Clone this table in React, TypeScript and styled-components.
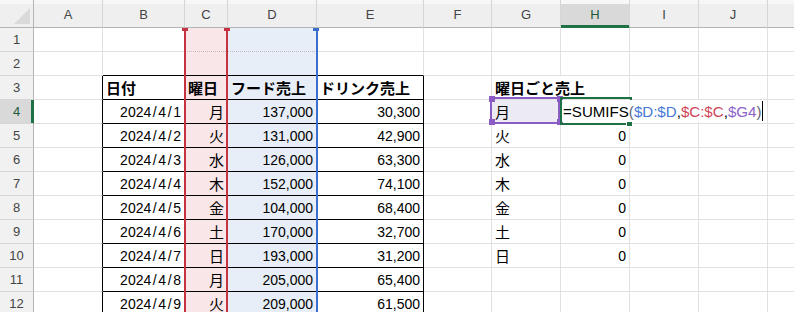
import React from 'react';
import styled, { createGlobalStyle } from 'styled-components';

const GlobalStyle = createGlobalStyle`
  html, body {
    margin: 0;
    padding: 0;
    background: #ffffff;
    overflow: hidden;
  }
  body {
    font-family: "Liberation Sans", "Noto Sans CJK JP", sans-serif;
  }
`;

// column widths include the right grid line
const COLS = ['A', 'B', 'C', 'D', 'E', 'F', 'G', 'H', 'I', 'J', 'K'];
const COL_W = [69, 82, 43, 89, 107, 68, 69, 69, 69, 69, 27];
const HEAD_W = 34;
const HEAD_H = 28;
const ROW_H = 24;
const ROW_COUNT = 12;

const colLeft = (i: number) => HEAD_W + COL_W.slice(0, i).reduce((a, b) => a + b, 0);
const rowTop = (r: number) => HEAD_H + ROW_H * (r - 1);

const GRID = '#e1e1e1';
const HEAD_LINE = '#b4b4b4';
const EXCEL_GREEN = '#1e7145';
const REF_BLUE = '#3b6fce';
const REF_RED = '#c4333f';
const REF_PURPLE = '#8a5cc4';

const sales = [
  ['2024/4/1', '月', '137,000', '30,300'],
  ['2024/4/2', '火', '131,000', '42,900'],
  ['2024/4/3', '水', '126,000', '63,300'],
  ['2024/4/4', '木', '152,000', '74,100'],
  ['2024/4/5', '金', '104,000', '68,400'],
  ['2024/4/6', '土', '170,000', '32,700'],
  ['2024/4/7', '日', '193,000', '31,200'],
  ['2024/4/8', '月', '205,000', '65,400'],
  ['2024/4/9', '火', '209,000', '61,500'],
];
const weekdays = ['月', '火', '水', '木', '金', '土', '日'];

type CellSpec = {
  text?: React.ReactNode;
  align?: 'left' | 'right';
  bold?: boolean;
  jp?: boolean;
  fill?: string;
  right?: string;
  bottom?: string;
  dotted?: boolean;
};

const DateText = ({ value }: { value: string }) => {
  const parts = value.split('/');
  return (
    <>
      {parts.map((p, i) => (
        <React.Fragment key={i}>
          {i > 0 && <Slash>/</Slash>}
          {p}
        </React.Fragment>
      ))}
    </>
  );
};

function specFor(row: number, col: number): CellSpec {
  const s: CellSpec = {};
  const inTable = row >= 3 && col >= 1 && col <= 4;

  if (inTable) {
    s.right = '#000';
    s.bottom = '#000';
  }
  if (row === 2 && col >= 1 && col <= 4) s.bottom = '#000';
  if (row >= 3 && col === 0) s.right = '#000';

  if (col === 2) s.fill = '#f8e6e9';
  if (col === 3) s.fill = '#e8eef8';
  if (row === 1 && (col === 2 || col === 3)) s.dotted = true;

  if (row === 3) {
    const heads: Record<number, string> = { 1: '日付', 2: '曜日', 3: 'フード売上', 4: 'ドリンク売上', 6: '曜日ごと売上' };
    if (heads[col]) {
      s.text = heads[col];
      s.bold = true;
      s.jp = true;
    }
    if (col === 6) s.right = 'transparent';
  }

  if (row >= 4) {
    const rec = sales[row - 4];
    if (col === 1) {
      s.text = <DateText value={rec[0]} />;
      s.align = 'right';
    }
    if (col === 2) {
      s.text = rec[1];
      s.align = 'right';
      s.jp = true;
    }
    if (col === 3) {
      s.text = rec[2];
      s.align = 'right';
    }
    if (col === 4) {
      s.text = rec[3];
      s.align = 'right';
    }
  }

  if (row >= 4 && row <= 10) {
    if (col === 6) {
      s.text = weekdays[row - 4];
      s.jp = true;
    }
    if (col === 7 && row > 4) {
      s.text = '0';
      s.align = 'right';
    }
  }
  if (row === 4 && col === 6) s.fill = '#ecebf4';

  return s;
}

export default function App() {
  const rows = Array.from({ length: ROW_COUNT }, (_, i) => i + 1);

  return (
    <>
      <GlobalStyle />
      <Sheet>
        <Corner>
          <svg width="34" height="28" viewBox="0 0 34 28">
            <polygon points="30,8 30,24 14,24" fill="#dadada" />
          </svg>
        </Corner>
        {COLS.map((c, i) => (
          <ColHead key={c} $active={i === 7}>
            {c === 'K' ? '' : c}
          </ColHead>
        ))}

        {rows.map((r) => (
          <React.Fragment key={r}>
            <RowHead $active={r === 4}>{r}</RowHead>
            {COLS.map((c, ci) => {
              const s = specFor(r, ci);
              return (
                <Cell
                  key={c}
                  $align={s.align}
                  $bold={s.bold}
                  $jp={s.jp}
                  $fill={s.fill}
                  $right={s.right}
                  $bottom={s.bottom}
                  $dotted={s.dotted}
                >
                  {s.text}
                </Cell>
              );
            })}
          </React.Fragment>
        ))}

        {/* $D:$D reference */}
        <RefBox $color={REF_BLUE} $x={colLeft(3) - 2} $y={HEAD_H} $w={92} $h={320} $open />
        <Handle $color={REF_BLUE} $x={colLeft(4) - 4} $y={HEAD_H} $h={3} />

        {/* $C:$C reference */}
        <RefBox $color={REF_RED} $x={colLeft(2) - 1} $y={HEAD_H} $w={44} $h={320} $open />
        <Handle $color={REF_RED} $x={colLeft(2) - 3} $y={HEAD_H} $h={3} />
        <Handle $color={REF_RED} $x={colLeft(3) - 4} $y={HEAD_H} $h={3} />

        {/* $G4 reference */}
        <RefBox $color={REF_PURPLE} $x={colLeft(6) - 2} $y={rowTop(4) - 3} $w={70} $h={27} />
        <Handle $color={REF_PURPLE} $x={colLeft(6) - 3} $y={rowTop(4) - 4} />
        <Handle $color={REF_PURPLE} $x={colLeft(7) - 4} $y={rowTop(4) - 4} />
        <Handle $color={REF_PURPLE} $x={colLeft(6) - 3} $y={rowTop(5) - 5} />
        <Handle $color={REF_PURPLE} $x={colLeft(7) - 4} $y={rowTop(5) - 5} />

        {/* active cell H4 in edit mode */}
        <ActiveBox $x={colLeft(7) - 1} $y={rowTop(4) - 3} />
        <FillHandle $x={colLeft(8) - 4} $y={rowTop(5) - 4} />
        <Editor $x={colLeft(7) + 1} $y={rowTop(4)}>
          <span>=SUMIFS</span>
          <Paren>(</Paren>
          <Ref $color="#4778d4">$D:$D</Ref>
          <span>,</span>
          <Ref $color="#d04457">$C:$C</Ref>
          <span>,</span>
          <Ref $color="#8b62c8">$G4</Ref>
          <Paren>)</Paren>
          <Caret />
        </Editor>
      </Sheet>
    </>
  );
}

const Sheet = styled.div`
  position: relative;
  display: grid;
  grid-template-columns: ${HEAD_W}px ${COL_W.map((w) => `${w}px`).join(' ')};
  grid-template-rows: ${HEAD_H}px repeat(${ROW_COUNT}, ${ROW_H}px);
  width: 794px;
  height: 312px;
  overflow: hidden;
  color: #000;
`;

const headBg = (active: boolean) =>
  `linear-gradient(#f7f7f7 0 4px, ${active ? '#d9d9d9' : '#efefef'} 4px)`;

const Corner = styled.div`
  box-sizing: border-box;
  background: ${headBg(false)};
  border-right: 1px solid ${HEAD_LINE};
  border-bottom: 1px solid ${HEAD_LINE};
  overflow: hidden;

  svg {
    display: block;
  }
`;

const ColHead = styled.div<{ $active?: boolean }>`
  box-sizing: border-box;
  display: flex;
  align-items: center;
  justify-content: center;
  padding-top: 1px;
  background: ${({ $active }) => headBg(!!$active)};
  border-right: 1px solid #d6d6d6;
  border-bottom: 1px solid ${({ $active }) => ($active ? EXCEL_GREEN : HEAD_LINE)};
  box-shadow: ${({ $active }) => ($active ? `inset 0 -2px 0 ${EXCEL_GREEN}` : 'none')};
  font-size: 13px;
  color: ${({ $active }) => ($active ? '#1c5a38' : '#444')};
`;

const RowHead = styled.div<{ $active?: boolean }>`
  box-sizing: border-box;
  display: flex;
  align-items: center;
  justify-content: center;
  background: ${({ $active }) => ($active ? '#d9d9d9' : '#f1f1f1')};
  border-right: 1px solid ${({ $active }) => ($active ? EXCEL_GREEN : HEAD_LINE)};
  border-bottom: 1px solid #d6d6d6;
  box-shadow: ${({ $active }) => ($active ? `inset -2px 0 0 ${EXCEL_GREEN}` : 'none')};
  font-size: 13px;
  color: ${({ $active }) => ($active ? '#1c5a38' : '#444')};
`;

const Cell = styled.div<{
  $align?: 'left' | 'right';
  $bold?: boolean;
  $jp?: boolean;
  $fill?: string;
  $right?: string;
  $bottom?: string;
  $dotted?: boolean;
}>`
  box-sizing: border-box;
  display: flex;
  align-items: center;
  justify-content: ${({ $align }) => ($align === 'right' ? 'flex-end' : 'flex-start')};
  min-width: 0;
  padding: 0 3px 0 3px;
  background: ${({ $fill }) => $fill ?? 'transparent'};
  border-right: 1px solid ${({ $right }) => $right ?? GRID};
  border-bottom: 1px ${({ $dotted }) => ($dotted ? 'dotted' : 'solid')}
    ${({ $bottom, $dotted }) => $bottom ?? ($dotted ? '#bdbdbd' : GRID)};
  font-size: ${({ $jp }) => ($jp ? 15 : 14)}px;
  font-weight: ${({ $bold }) => ($bold ? 700 : 400)};
  white-space: nowrap;
  overflow: visible;
`;

const Slash = styled.span`
  margin: 0 1.6px;
`;

const RefBox = styled.div<{ $color: string; $x: number; $y: number; $w: number; $h: number; $open?: boolean }>`
  position: absolute;
  box-sizing: border-box;
  left: ${({ $x }) => $x}px;
  top: ${({ $y }) => $y}px;
  width: ${({ $w }) => $w}px;
  height: ${({ $h }) => $h}px;
  border: 2px solid ${({ $color }) => $color};
  border-top-width: ${({ $open }) => ($open ? 0 : 2)}px;
  pointer-events: none;
`;

const Handle = styled.div<{ $color: string; $x: number; $y: number; $h?: number }>`
  position: absolute;
  left: ${({ $x }) => $x}px;
  top: ${({ $y }) => $y}px;
  width: 6px;
  height: ${({ $h }) => $h ?? 6}px;
  background: ${({ $color }) => $color};
`;

const ActiveBox = styled.div<{ $x: number; $y: number }>`
  position: absolute;
  box-sizing: border-box;
  left: ${({ $x }) => $x}px;
  top: ${({ $y }) => $y}px;
  width: 72px;
  height: 28px;
  border: 2px solid ${EXCEL_GREEN};
`;

const FillHandle = styled.div<{ $x: number; $y: number }>`
  position: absolute;
  left: ${({ $x }) => $x}px;
  top: ${({ $y }) => $y}px;
  width: 5px;
  height: 5px;
  background: ${EXCEL_GREEN};
  border: 1px solid #ffffff;
`;

const Editor = styled.div<{ $x: number; $y: number }>`
  position: absolute;
  box-sizing: border-box;
  left: ${({ $x }) => $x}px;
  top: ${({ $y }) => $y}px;
  width: 205px;
  height: 22px;
  display: flex;
  align-items: center;
  padding-left: 1px;
  background: #ffffff;
  font-size: 15.1px;
  white-space: nowrap;
  color: #000;

  & > * {
    flex-shrink: 0;
  }
`;

const Paren = styled.span`
  color: #5d6478;
`;

const Ref = styled.span<{ $color: string }>`
  color: ${({ $color }) => $color};
`;

const Caret = styled.span`
  display: inline-block;
  width: 1px;
  height: 20px;
  margin-left: 1px;
  background: #000;
`;
